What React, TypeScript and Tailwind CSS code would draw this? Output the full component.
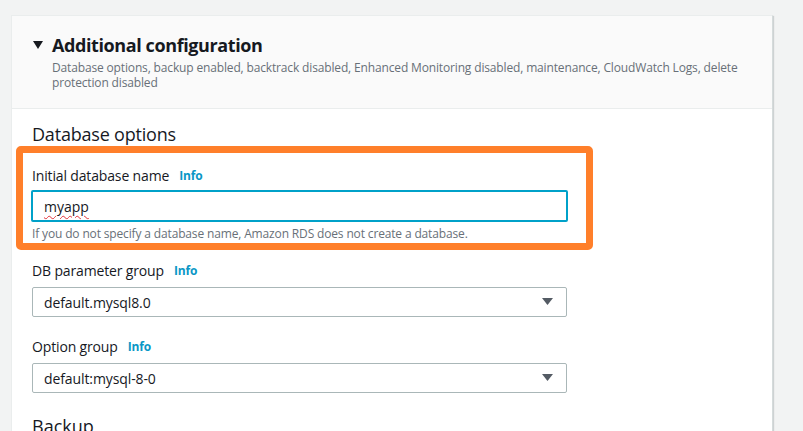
import React from "react";

const font = { fontFamily: '"Open Sans", "Noto Sans", Arial, sans-serif' };

function Caret() {
  return (
    <svg width="11" height="8" viewBox="0 0 11 8" className="shrink-0">
      <polygon points="0,0 11,0 5.5,7" fill="#545b64" />
    </svg>
  );
}

function Label({ text }: { text: string }) {
  return (
    <div className="flex items-center h-5 text-[14px] text-[#16191f] leading-5 tracking-[-0.15px]">
      <span>{text}</span>
      <span className="ml-[10px] text-[12px] font-bold text-[#0a97c6]">Info</span>
    </div>
  );
}

function Select({ value }: { value: string }) {
  return (
    <div className="w-[535px] h-[30px] border border-[#aab7b8] rounded-[2px] bg-white flex items-center justify-between pl-[11px] pr-[13px] text-[14px] text-[#16191f] tracking-[-0.1px]">
      <span>{value}</span>
      <Caret />
    </div>
  );
}

export default function App() {
  return (
    <div className="w-[803px] h-[431px] overflow-hidden bg-[#f2f3f3] pt-[15px] pl-[11px]" style={font}>
      <div className="w-[762px] h-[440px] bg-white border border-[#eaeded] border-r-[#d5dbdb] shadow-[1px_1px_1px_0_rgba(0,28,36,0.15)]">
        <div className="bg-[#fafafa] border-b border-[#eaeded] pt-[17px] pb-[18px] pl-[21px] h-[93px]">
          <div className="flex items-center h-[24px]">
            <svg width="10" height="9" viewBox="0 0 10 9" className="mr-[9px]">
              <polygon points="0,0 10,0 5,8" fill="#16191f" />
            </svg>
            <span className="text-[18px] font-bold text-[#16191f] tracking-[-0.4px]">Additional configuration</span>
          </div>
          <div className="pl-[19px] mt-[3px] text-[12px] leading-[15px] text-[#687078] w-[712px] tracking-[-0.15px]">
            Database options, backup enabled, backtrack disabled, Enhanced Monitoring disabled, maintenance, CloudWatch Logs, delete protection disabled
          </div>
        </div>
        <div className="pl-[20px] pt-[13px]">
          <div className="text-[18px] leading-6 text-[#16191f] tracking-[-0.2px]">Database options</div>
          <div className="-ml-[16px] w-[577px] border-[7px] border-[#ff7f2a] rounded-[5px] pl-[8px] pt-[13px] pb-[1px]">
            <div className="pl-[1px]">
              <Label text="Initial database name" />
            </div>
            <div className="mt-[4px] w-[537px] h-[32px] border-2 border-[#00a1c9] rounded-[2px] flex items-center pl-[11px] text-[14px] text-[#16191f]">
              <span className="underline decoration-wavy decoration-[#e0323a] decoration-1 underline-offset-[3px]">myapp</span>
            </div>
            <div className="mt-[4px] pl-[1px] text-[12px] leading-4 text-[#687078] tracking-[-0.15px]">
              If you do not specify a database name, Amazon RDS does not create a database.
            </div>
          </div>
          <div className="mt-[11px]">
            <Label text="DB parameter group" />
          </div>
          <div className="mt-[6px]">
            <Select value="default.mysql8.0" />
          </div>
          <div className="mt-[20px]">
            <Label text="Option group" />
          </div>
          <div className="mt-[6px]">
            <Select value="default:mysql-8-0" />
          </div>
          <div className="mt-[21px] text-[18px] leading-6 text-[#16191f]">Backup</div>
        </div>
      </div>
    </div>
  );
}
